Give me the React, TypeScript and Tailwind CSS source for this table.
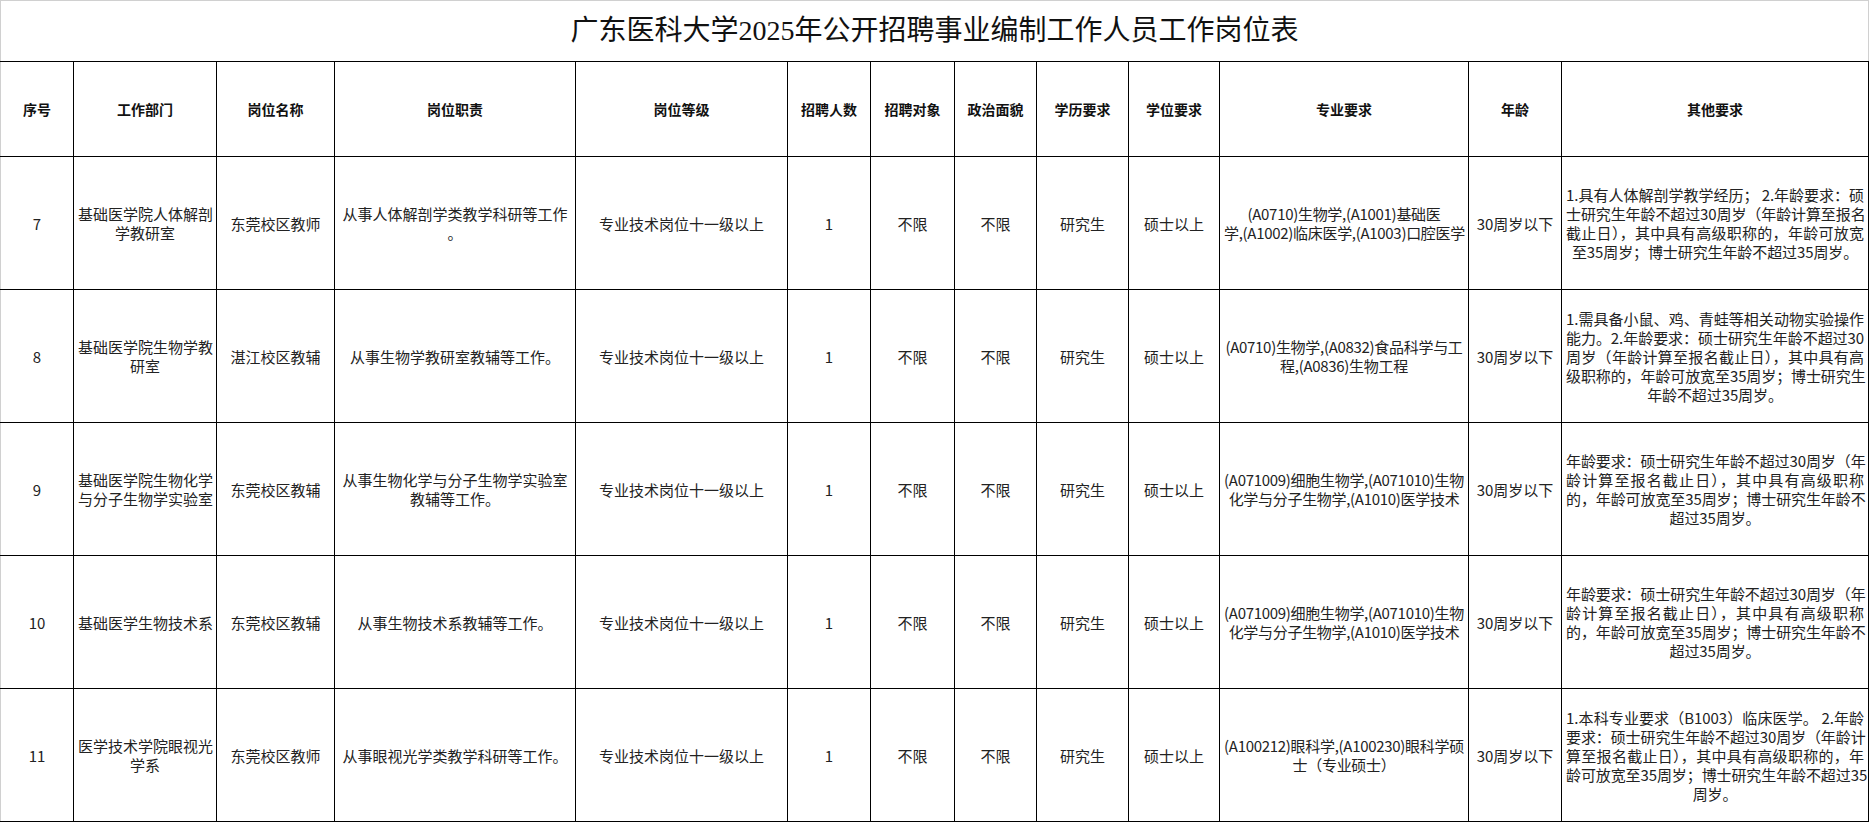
import React from "react";

type Row = {
  no: string;
  dept: string[];
  post: string;
  duty: string[];
  level: string;
  count: string;
  target: string;
  political: string;
  edu: string;
  degree: string;
  major: string[];
  age: string;
  other: string[];
};

const headers = [
  "序号",
  "工作部门",
  "岗位名称",
  "岗位职责",
  "岗位等级",
  "招聘人数",
  "招聘对象",
  "政治面貌",
  "学历要求",
  "学位要求",
  "专业要求",
  "年龄",
  "其他要求",
];

// column widths taken from the sheet
const widths = [73, 143, 118, 241, 212, 83, 84, 82, 92, 91, 249, 93, 307];

const ageRule9 = [
  "年龄要求：硕士研究生年龄不超过30周岁（年",
  "龄计算至报名截止日），其中具有高级职称",
  "的，年龄可放宽至35周岁；博士研究生年龄不",
  "超过35周岁。",
];

const rows: Row[] = [
  {
    no: "7",
    dept: ["基础医学院人体解剖", "学教研室"],
    post: "东莞校区教师",
    duty: ["从事人体解剖学类教学科研等工作", "。"],
    level: "专业技术岗位十一级以上",
    count: "1",
    target: "不限",
    political: "不限",
    edu: "研究生",
    degree: "硕士以上",
    major: ["(A0710)生物学,(A1001)基础医", "学,(A1002)临床医学,(A1003)口腔医学"],
    age: "30周岁以下",
    other: [
      "1.具有人体解剖学教学经历； 2.年龄要求：硕",
      "士研究生年龄不超过30周岁（年龄计算至报名",
      "截止日），其中具有高级职称的，年龄可放宽",
      "至35周岁；博士研究生年龄不超过35周岁。",
    ],
  },
  {
    no: "8",
    dept: ["基础医学院生物学教", "研室"],
    post: "湛江校区教辅",
    duty: ["从事生物学教研室教辅等工作。"],
    level: "专业技术岗位十一级以上",
    count: "1",
    target: "不限",
    political: "不限",
    edu: "研究生",
    degree: "硕士以上",
    major: ["(A0710)生物学,(A0832)食品科学与工", "程,(A0836)生物工程"],
    age: "30周岁以下",
    other: [
      "1.需具备小鼠、鸡、青蛙等相关动物实验操作",
      "能力。2.年龄要求：硕士研究生年龄不超过30",
      "周岁（年龄计算至报名截止日），其中具有高",
      "级职称的，年龄可放宽至35周岁；博士研究生",
      "年龄不超过35周岁。",
    ],
  },
  {
    no: "9",
    dept: ["基础医学院生物化学", "与分子生物学实验室"],
    post: "东莞校区教辅",
    duty: ["从事生物化学与分子生物学实验室", "教辅等工作。"],
    level: "专业技术岗位十一级以上",
    count: "1",
    target: "不限",
    political: "不限",
    edu: "研究生",
    degree: "硕士以上",
    major: ["(A071009)细胞生物学,(A071010)生物", "化学与分子生物学,(A1010)医学技术"],
    age: "30周岁以下",
    other: ageRule9,
  },
  {
    no: "10",
    dept: ["基础医学生物技术系"],
    post: "东莞校区教辅",
    duty: ["从事生物技术系教辅等工作。"],
    level: "专业技术岗位十一级以上",
    count: "1",
    target: "不限",
    political: "不限",
    edu: "研究生",
    degree: "硕士以上",
    major: ["(A071009)细胞生物学,(A071010)生物", "化学与分子生物学,(A1010)医学技术"],
    age: "30周岁以下",
    other: ageRule9,
  },
  {
    no: "11",
    dept: ["医学技术学院眼视光", "学系"],
    post: "东莞校区教师",
    duty: ["从事眼视光学类教学科研等工作。"],
    level: "专业技术岗位十一级以上",
    count: "1",
    target: "不限",
    political: "不限",
    edu: "研究生",
    degree: "硕士以上",
    major: ["(A100212)眼科学,(A100230)眼科学硕", "士（专业硕士）"],
    age: "30周岁以下",
    other: [
      "1.本科专业要求（B1003）临床医学。 2.年龄",
      "要求：硕士研究生年龄不超过30周岁（年龄计",
      "算至报名截止日），其中具有高级职称的，年",
      "龄可放宽至35周岁；博士研究生年龄不超过35",
      "周岁。",
    ],
  },
];

function Lines({ lines }: { lines: string[] }) {
  return (
    <>
      {lines.map((l, i) => (
        <div key={i} className="whitespace-nowrap">
          {l}
        </div>
      ))}
    </>
  );
}

// spreadsheet-style justify: full lines stretched, last line centered
function Justified({ lines }: { lines: string[] }) {
  return (
    <>
      {lines.map((l, i) =>
        i < lines.length - 1 ? (
          <div key={i} className="whitespace-nowrap text-justify [text-align-last:justify]">
            {l}
          </div>
        ) : (
          <div key={i} className="whitespace-nowrap text-center">
            {l}
          </div>
        )
      )}
    </>
  );
}

export default function App() {
  const cell = "border border-black px-[4px] text-center align-middle";
  const first = "border-l-[#d0d0d0]";

  return (
    <div className="bg-white w-[1869px] h-[823px] overflow-hidden font-['Noto_Sans_CJK_SC',sans-serif] text-[#222]">
      <table className="w-[1868px] table-fixed border-collapse">
        <colgroup>
          {widths.map((w, i) => (
            <col key={i} style={{ width: w }} />
          ))}
        </colgroup>
        <tbody>
          <tr className="h-[61px]">
            <td
              colSpan={13}
              className="border border-[#d0d0d0] border-b-black text-center align-middle font-['Liberation_Serif','Noto_Sans_CJK_SC',serif] text-[28px] leading-[34px] text-[#111]"
            >
              广东医科大学2025年公开招聘事业编制工作人员工作岗位表
            </td>
          </tr>
          <tr className="h-[95px]">
            {headers.map((h, i) => (
              <td
                key={h}
                className={`${cell} ${i === 0 ? first : ""} font-bold text-[14px] text-[#111]`}
              >
                {h}
              </td>
            ))}
          </tr>
          {rows.map((r) => (
            <tr key={r.no} className="h-[133px] text-[15px] leading-[19px]">
              <td className={`${cell} ${first}`}>{r.no}</td>
              <td className={cell}>
                <Lines lines={r.dept} />
              </td>
              <td className={cell}>{r.post}</td>
              <td className={cell}>
                <Lines lines={r.duty} />
              </td>
              <td className={cell}>{r.level}</td>
              <td className={cell}>{r.count}</td>
              <td className={cell}>{r.target}</td>
              <td className={cell}>{r.political}</td>
              <td className={cell}>{r.edu}</td>
              <td className={cell}>{r.degree}</td>
              <td className={`${cell} px-0 tracking-[-0.3px]`}>
                <Lines lines={r.major} />
              </td>
              <td className={cell}>{r.age}</td>
              <td className="border border-black px-[4px] align-middle tracking-[-0.1px]">
                <Justified lines={r.other} />
              </td>
            </tr>
          ))}
        </tbody>
      </table>
    </div>
  );
}
